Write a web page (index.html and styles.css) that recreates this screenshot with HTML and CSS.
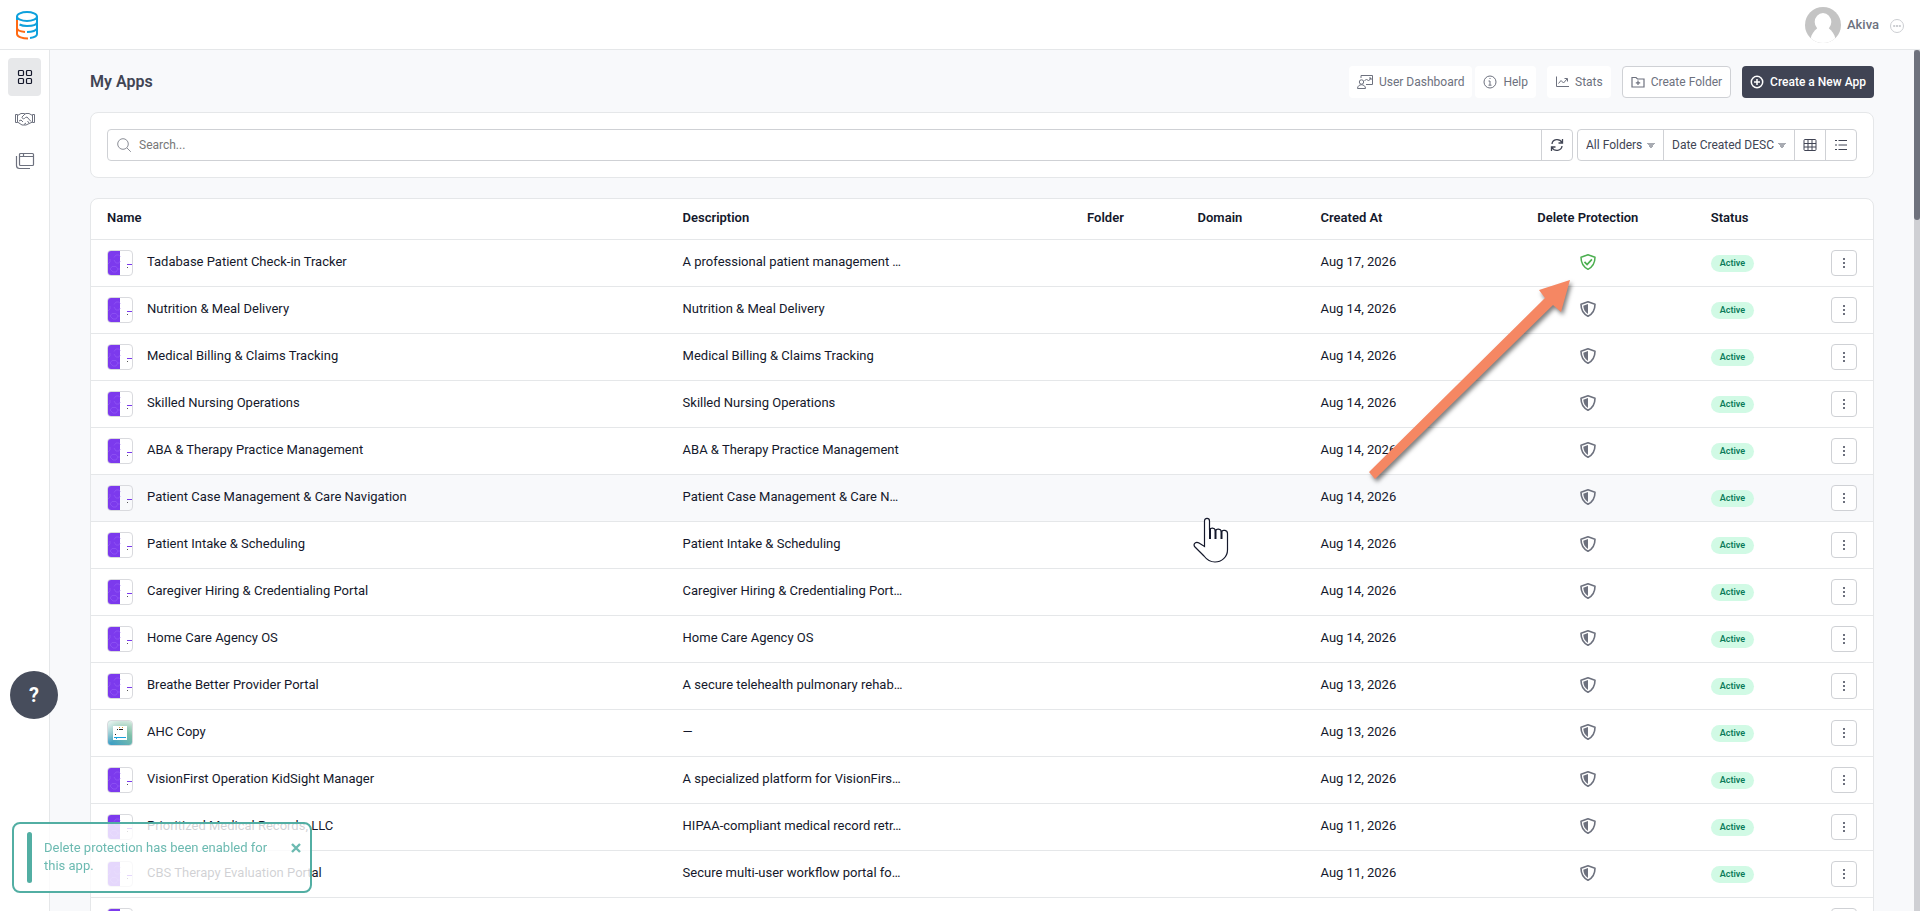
FILE: index.html
```
<!DOCTYPE html>
<html lang="en">
<head>
    <meta charset="UTF-8">
    <meta name="viewport" content="width=device-width, initial-scale=1.0">
    <title>My Apps</title>
    <link rel="stylesheet" href="styles.css">
</head>
<body>
    <svg class="sprite" aria-hidden="true">
        <symbol id="shield" viewBox="0 0 16 16">
            <path d="M8 .8 15 3.300c0 6-2 9.500-7 12-5-2.500-7-6-7-12z" fill="none" stroke="currentColor" stroke-width="1.600" stroke-linejoin="round"/>
            <path d="M8 3v10C4.800 10.800 3.500 8.500 3.300 4.800z" fill="currentColor"/>
        </symbol>
        <symbol id="shield-check" viewBox="0 0 16 16">
            <path d="M8 .8 15 3.300c0 6-2 9.500-7 12-5-2.500-7-6-7-12z" fill="none" stroke="currentColor" stroke-width="1.500" stroke-linejoin="round"/>
            <path d="m4.500 7.800 2.600 2.700 4.800-5.200" fill="none" stroke="currentColor" stroke-width="1.700"/>
        </symbol>
        <symbol id="dots" viewBox="0 0 4 12">
            <path d="M1 1h2v2H1zM1 5h2v2H1zM1 9h2v2H1z" fill="currentColor"/>
        </symbol>
        <symbol id="thumb-purple" viewBox="0 0 24 24">
            <path d="M0 0h12v24H0z" fill="#7c3aed"/>
            <g fill="none" stroke="#8b4ff2">
                <path d="M6 6.500 8 4h3l1 1.500M6 9l2 3h3l1-2M2 18l2-2.500h4L10 18l-2 3H5zM0 13l2-2V8M10 18h2"/>
            </g>
            <path d="M19 13h5v1h-5z" fill="#7c3aed"/>
            <path d="M19 16h1v1h-1z" fill="#555"/>
        </symbol>
        <symbol id="thumb-copy" viewBox="0 0 24 24">
            <linearGradient id="copyBg" x1="1" y1="0" x2="0.200" y2="1">
                <stop offset="0" stop-color="#d5e8dd"/>
                <stop offset="0.400" stop-color="#7fc0a8"/>
                <stop offset="1" stop-color="#3f9fc4"/>
            </linearGradient>
            <linearGradient id="copyShine" x1="0" y1="0" x2="0.500" y2="0.600">
                <stop offset="0" stop-color="#fff" stop-opacity="0.900"/>
                <stop offset="1" stop-color="#fff" stop-opacity="0"/>
            </linearGradient>
            <path d="M0 0h24v24H0z" fill="url(#copyBg)"/>
            <path d="M0 0h24v24H0z" fill="url(#copyShine)"/>
            <path d="M5 5h14v14H5z" fill="#fff"/>
            <path d="M9 8h1v1H9zM11 8h4v1h-4zM7 13h1v1H7z" fill="#222"/>
            <path d="M11 6h1v1h-1zM14 6h1v1h-1z" fill="#e0a030"/>
            <path d="M6 16h12v1H6zM8 17h1v1H8z" fill="#18a0dc"/>
        </symbol>
    </svg>

    <header class="topbar">
        <a href="#" class="logo" aria-label="Home">
            <svg width="24" height="30" viewBox="0 0 24 30" fill="none" stroke="#0ea0dc" stroke-width="2">
                <ellipse cx="12" cy="6.500" rx="10" ry="4.500"/>
                <path d="M22 6.500V24c0 2-3 3.500-7 4M22 12c0 3-5 4-10 4-3 0-5.500-.500-7.500-1.500M22 18c0 2.500-5 4-10 4"/>
                <path d="M2 6.500V10"/>
                <path d="M2 10v14c0 3 6 4.500 11 4.500M2 18c0 2 3 3.500 8 4" stroke="#ff6a13"/>
            </svg>
        </a>
        <div class="account">
            <svg class="avatar" viewBox="0 0 36 36">
                <path d="M0 0h36v36H0z" fill="#c4c4c4"/>
                <ellipse cx="18" cy="15" rx="8.300" ry="9" fill="#fff"/>
                <path d="M12.500 21C9 24 6.500 27 5.500 32v4h25v-4c-1-5-3.500-8-7-11z" fill="#fff"/>
            </svg>
            <span class="userName">Akiva</span>
            <button class="moreBtn" aria-label="Account menu">
                <svg width="14" height="14" viewBox="0 0 14 14" fill="none" stroke="#ccced2">
                    <circle cx="7" cy="7" r="6.500"/>
                    <path d="M3.200 7h2M6 7h2M8.800 7h2" stroke-width="2"/>
                </svg>
            </button>
        </div>
    </header>

    <div class="layout">
        <nav class="sidebar">
            <a href="#" class="active" aria-label="Apps">
                <svg width="16" height="16" viewBox="0 0 16 16" fill="none" stroke="currentColor" stroke-width="1.200">
                    <rect x="1.500" y="1.500" width="5" height="5" rx="1"/>
                    <rect x="9.500" y="1.500" width="5" height="5" rx="1"/>
                    <rect x="1.500" y="9.500" width="5" height="5" rx="1"/>
                    <rect x="9.500" y="9.500" width="5" height="5" rx="1"/>
                </svg>
            </a>
            <a href="#" aria-label="Partners">
                <svg width="20" height="14" viewBox="0 0 20 14" fill="none" stroke="currentColor">
                    <path d="M.500 2.500h2v8h-2zM17.500 2.500h2v8h-2zM2.500 3.500 6 1.500h3l1 .500 1-.500h3l3.500 2M2.500 10l4.500 3h4l6.500-3M10 2 7 5c0 2 2 2.500 3.500.500l1.500-.500 4 4.500M9 12.500l2-1.500M12.500 9l1.500 2M4 9l2-1 2 2"/>
                </svg>
            </a>
            <a href="#" aria-label="Pages">
                <svg width="20" height="18" viewBox="0 0 20 18" fill="none" stroke="currentColor" stroke-width="1.200">
                    <rect x="4.500" y="1.500" width="14" height="12" rx="1"/>
                    <path d="M4.500 4.500h14M8.500 1.500v3M1.500 4v9.500q0 3 3 3H15"/>
                </svg>
            </a>
        </nav>

        <main class="content">
            <div class="pageHead">
                <h1>My Apps</h1>
                <div class="actions">
                    <button class="btn">
                        <svg width="16" height="16" viewBox="0 0 16 16" fill="none" stroke="currentColor">
                            <path d="M4 4V1.500h11.500v9H9M7.500 7l2-2 2 2 2.500-3M12 4h2v2"/>
                            <circle cx="4.500" cy="8" r="2.200"/>
                            <path d="M.500 14.500c0-5 8-5 8 0z"/>
                        </svg>
                        User Dashboard
                    </button>
                    <button class="btn helpBtn">
                        <svg width="14" height="14" viewBox="0 0 14 14" fill="none" stroke="currentColor">
                            <circle cx="7" cy="7" r="6"/>
                            <path d="M5.500 6H7v4M5.500 10.200h3M6.500 3.500h1"/>
                        </svg>
                        Help
                    </button>
                    <button class="btn">
                        <svg width="14" height="14" viewBox="0 0 14 14" fill="none" stroke="currentColor">
                            <path d="M1.500 1.500v10H14M3.500 8.500 6 5.500l2.500 2.500L12 4M9.500 3.500h3v3"/>
                        </svg>
                        Stats
                    </button>
                    <button class="btn outline">
                        <svg width="14" height="14" viewBox="0 0 14 14" fill="none" stroke="currentColor" stroke-width="1.200">
                            <path d="M1 2.500h4l1.500 1.500H13v8H1zM7 5.500v4.500M4.800 7.800h4.400"/>
                        </svg>
                        Create Folder
                    </button>
                    <button class="btn primary">
                        <svg width="14" height="14" viewBox="0 0 14 14" fill="none" stroke="currentColor" stroke-width="1.500">
                            <circle cx="7" cy="7" r="5.700"/>
                            <path d="M7 4v6M4 7h6"/>
                        </svg>
                        Create a New App
                    </button>
                </div>
            </div>

            <section class="card filters">
                <div class="searchGroup">
                    <label class="searchBox">
                        <svg width="14" height="14" viewBox="0 0 14 14" fill="none" stroke="#8a8d96">
                            <circle cx="6" cy="6" r="5.300"/>
                            <path d="m9.800 9.800 4 4"/>
                        </svg>
                        <input type="text" placeholder="Search..." aria-label="Search">
                    </label>
                    <button class="tool" aria-label="Refresh">
                        <svg width="14" height="14" viewBox="0 0 14 14" fill="none" stroke="currentColor" stroke-width="1.300">
                            <path d="M2 6c.500-5 7.500-6 10-1.500M12 8c-.500 5-7.500 6-10 1.500M12.500 1v4h-4M1.500 13V9h4"/>
                        </svg>
                    </button>
                </div>
                <div class="viewGroup">
                    <select class="folders" aria-label="Folder">
                        <option>All Folders</option>
                    </select>
                    <select class="sorting" aria-label="Sort by">
                        <option>Date Created DESC</option>
                    </select>
                    <button class="tool" aria-label="Grid view">
                        <svg width="14" height="14" viewBox="0 0 14 14" fill="none" stroke="currentColor">
                            <rect x="1" y="1.500" width="12" height="11" rx="1"/>
                            <path d="M1 5.500h12M1 9h12M5 1.500v11M9 1.500v11"/>
                        </svg>
                    </button>
                    <button class="tool" aria-label="List view">
                        <svg width="14" height="14" viewBox="0 0 14 14" fill="none" stroke="currentColor" stroke-width="1.200">
                            <path d="M4.500 2.500H13M4.500 7H13M4.500 11.500H13M1 2.500h2M1 7h2M1 11.500h2"/>
                        </svg>
                    </button>
                </div>
            </section>

            <section class="card">
                <table class="apps">
                    <thead>
                        <tr>
                            <th class="colName">Name</th>
                            <th class="colDesc">Description</th>
                            <th class="colFolder">Folder</th>
                            <th class="colDomain">Domain</th>
                            <th class="colCreated">Created At</th>
                            <th class="colProtect">Delete Protection</th>
                            <th class="colStatus">Status</th>
                            <th class="colMenu"></th>
                        </tr>
                    </thead>
                    <tbody id="appRows"></tbody>
                </table>
            </section>
        </main>
        <div class="scrollTrack"><div class="scrollThumb"></div></div>
    </div>

    <button class="helpBubble" aria-label="Help">?</button>

    <div class="toast" role="status">
        <span class="toastBar"></span>
        <p>Delete protection has been enabled for this app.</p>
        <button aria-label="Close">
            <svg width="10" height="10" viewBox="0 0 10 10" stroke="currentColor" stroke-width="2.400">
                <path d="m1 1 8 8M9 1 1 9"/>
            </svg>
        </button>
    </div>

    <svg class="arrow" width="220" height="220" viewBox="0 0 220 220">
        <path d="M206 10 197 42 189 35 11 209 5 202 181 28 175 20z" fill="#f58763"/>
    </svg>

    <svg class="hand" width="36" height="48" viewBox="0 0 36 48" fill="#fff" stroke="#14182b" stroke-width="1.200">
        <path d="M11.500 29.500V4c0-3.500 5-3.500 5 0v9c1-2.500 5-2.500 6 .500 1-2 5-2 6 1 1-2 6-1.500 6 2V33c0 7-6 12-12.500 12-5 0-8-2-11-6L2 30c-2.500-3 1-6 4-4z"/>
        <path d="M17 12v10M22.500 13v9M28.500 14v8" stroke-width="2"/>
    </svg>

    <script src="rows.js"></script>
</body>
</html>
```

FILE: styles.css
```
*{
    padding: 0px;
    margin: 0px;
    box-sizing: border-box;
}
body{
    height: 100vh;
    display: flex;
    flex-direction: column;
    overflow: hidden;
    font-family: Roboto, "Liberation Sans", sans-serif;
    font-size: 13px;
    line-height: 18px;
    color: #14182b;
    background-color: #f8f9fb;
}
button, input, select{
    font: inherit;
    color: inherit;
    background: none;
    border: none;
}
button{
    cursor: pointer;
}
svg{
    display: block;
    flex-shrink: 0;
}
.sprite{
    position: absolute;
    width: 0px;
    height: 0px;
}

.topbar{
    display: flex;
    align-items: center;
    justify-content: space-between;
    height: 50px;
    padding: 0px 16px 0px 15px;
    background-color: #fff;
    border-bottom: 1px solid #e5e7e9;
}
.account{
    display: flex;
    align-items: center;
    gap: 6px;
    color: #6d717e;
}
.avatar{
    width: 36px;
    height: 36px;
    border-radius: 50%;
}
.userName{
    font-weight: 500;
}
.moreBtn{
    margin-left: 5px;
    padding-top: 3px;
}

.layout{
    flex: 1;
    display: flex;
    min-height: 0px;
}
.sidebar{
    display: flex;
    flex-direction: column;
    gap: 4px;
    width: 50px;
    padding: 8px;
    background-color: #fff;
    border-right: 1px solid #e5e7e9;
}
.sidebar a{
    display: flex;
    align-items: center;
    justify-content: center;
    height: 38px;
    border-radius: 4px;
    color: #6d717e;
}
.sidebar .active{
    color: #14182b;
    background-color: #e7e8ea;
}
.content{
    flex: 1;
    min-width: 0px;
    overflow: hidden;
    padding: 16px 40px 0px;
}
.scrollTrack{
    width: 6px;
    background-color: #cfd0d4;
}
.scrollThumb{
    height: 170px;
    border-radius: 3px;
    background-color: #6f727d;
}

.pageHead{
    display: flex;
    align-items: center;
    justify-content: space-between;
    margin-bottom: 14px;
}
.pageHead h1{
    font-size: 16px;
    font-weight: 600;
    color: #414554;
}
.actions{
    display: flex;
    gap: 11px;
}
.btn{
    display: flex;
    align-items: center;
    gap: 6px;
    height: 32px;
    padding: 0px 8px;
    border-radius: 4px;
    font-size: 12px;
    color: #6d717e;
    background-color: #fff;
}
.helpBtn{
    margin-left: -8px;
}
.outline{
    border: 1px solid #cfd1d5;
}
.primary{
    font-weight: 500;
    color: #fff;
    background-color: #404454;
}

.card{
    margin-bottom: 20px;
    background-color: #fff;
    border: 1px solid #e5e7e9;
    border-radius: 8px;
}
.filters{
    display: flex;
    gap: 4px;
    padding: 16px;
}
.searchGroup, .viewGroup{
    display: flex;
    height: 32px;
    border: 1px solid #cfd1d5;
    border-radius: 4px;
    color: #414554;
}
.searchGroup{
    flex: 1;
}
.searchBox{
    flex: 1;
    display: flex;
    align-items: center;
    gap: 8px;
    padding-left: 9px;
}
.searchBox input{
    flex: 1;
    outline: none;
    font-size: 12px;
}
.searchBox input::placeholder{
    color: #777;
}
.tool{
    display: flex;
    align-items: center;
    justify-content: center;
    width: 31px;
    border-left: 1px solid #cfd1d5;
}
.viewGroup select{
    appearance: none;
    padding: 0px 20px 0px 8px;
    font-size: 12px;
    background: linear-gradient(to bottom right, #a8abb2 55%, transparent 55%) no-repeat right 8px center / 4px 5px,
        linear-gradient(to bottom left, #a8abb2 55%, transparent 55%) no-repeat right 12px center / 4px 5px;
}
.viewGroup .sorting{
    border-left: 1px solid #cfd1d5;
}

.apps{
    width: 100%;
    table-layout: fixed;
    border-collapse: collapse;
}
.apps th{
    height: 40px;
    padding: 0px 16px 2px;
    text-align: left;
    font-weight: 600;
    white-space: nowrap;
}
.apps td{
    height: 47px;
    padding: 0px 16px 2px;
    border-top: 1px solid #e5e7e9;
    white-space: nowrap;
}
.apps .centered{
    padding: 0px 16px;
}
.apps .hovered{
    background-color: #f8f9fb;
}
.colName{ width: 32.3%; }
.colDesc{ width: 22.7%; }
.colFolder{ width: 6.2%; }
.colDomain{ width: 6.9%; }
.colCreated{ width: 9.9%; }
.apps .colProtect{ width: 12%; text-align: center; }
.colStatus{ width: 6%; }
.appCell{
    display: flex;
    align-items: center;
    gap: 14px;
}
.appName{
    padding-bottom: 2px;
}
.thumb{
    width: 26px;
    height: 26px;
    border: 1px solid #d9dade;
    border-radius: 4px;
}
.shield{
    width: 16px;
    height: 16px;
    margin: 0px auto;
    color: #6d717e;
}
.shield.on{
    color: #4caf50;
}
.badge{
    display: inline-block;
    padding: 0px 9px;
    border-radius: 9px;
    font-size: 9px;
    line-height: 17px;
    font-weight: 600;
    color: #0b7a5a;
    background-color: #d1fae5;
}
.rowMenu{
    display: flex;
    align-items: center;
    justify-content: center;
    width: 26px;
    height: 26px;
    margin-left: auto;
    border: 1px solid #cfd1d5;
    border-radius: 4px;
    color: #6d717e;
    background-color: #fff;
}
.rowMenu svg{
    width: 4px;
    height: 12px;
}

.helpBubble{
    position: fixed;
    left: 10px;
    bottom: 192px;
    width: 48px;
    height: 48px;
    border-radius: 50%;
    font-size: 20px;
    font-weight: 700;
    color: #fff;
    background-color: #474d5c;
}
.toast{
    position: fixed;
    left: 12px;
    bottom: 18px;
    display: flex;
    gap: 12px;
    width: 300px;
    padding: 8px 9px 8px 13px;
    border: 2px solid #52aea3;
    border-radius: 8px;
    color: #6cbab1;
    background-color: rgba(255, 255, 255, .8);
}
.toastBar{
    width: 5px;
    border-radius: 3px;
    background-color: #52aea3;
}
.toast p{
    flex: 1;
    padding: 7px 0px 8px;
}
.toast button{
    align-self: flex-start;
    padding-top: 11px;
}
.arrow{
    position: fixed;
    left: 1364px;
    top: 270px;
    filter: drop-shadow(2px 3px 2px rgba(0, 0, 0, .5));
}
.hand{
    position: fixed;
    left: 1193px;
    top: 517px;
}
```

FILE: rows.js
```
const apps = [
    ['Tadabase Patient Check-in Tracker', 'A professional patient management …', 'Aug 17, 2026'],
    ['Nutrition & Meal Delivery', 'Nutrition & Meal Delivery', 'Aug 14, 2026'],
    ['Medical Billing & Claims Tracking', 'Medical Billing & Claims Tracking', 'Aug 14, 2026'],
    ['Skilled Nursing Operations', 'Skilled Nursing Operations', 'Aug 14, 2026'],
    ['ABA & Therapy Practice Management', 'ABA & Therapy Practice Management', 'Aug 14, 2026'],
    ['Patient Case Management & Care Navigation', 'Patient Case Management & Care N…', 'Aug 14, 2026'],
    ['Patient Intake & Scheduling', 'Patient Intake & Scheduling', 'Aug 14, 2026'],
    ['Caregiver Hiring & Credentialing Portal', 'Caregiver Hiring & Credentialing Port…', 'Aug 14, 2026'],
    ['Home Care Agency OS', 'Home Care Agency OS', 'Aug 14, 2026'],
    ['Breathe Better Provider Portal', 'A secure telehealth pulmonary rehab…', 'Aug 13, 2026'],
    ['AHC Copy', '—', 'Aug 13, 2026'],
    ['VisionFirst Operation KidSight Manager', 'A specialized platform for VisionFirs…', 'Aug 12, 2026'],
    ['Prioritized Medical Records, LLC', 'HIPAA-compliant medical record retr…', 'Aug 11, 2026'],
    ['CBS Therapy Evaluation Portal', 'Secure multi-user workflow portal fo…', 'Aug 11, 2026'],
    ['', '', '']
];
const protectedRow = 0;
const hoveredRow = 5;

function escapeText(text){
    return text.replace(/&/g, '&amp;');
}

document.getElementById('appRows').innerHTML = apps.map(function([name, desc, created], i){
    const on = i == protectedRow;
    return `<tr class="${i == hoveredRow ? 'hovered' : ''}">
        <td class="centered"><div class="appCell">
            <svg class="thumb"><use href="#${name == 'AHC Copy' ? 'thumb-copy' : 'thumb-purple'}"/></svg>
            <span class="appName">${escapeText(name)}</span>
        </div></td>
        <td>${escapeText(desc)}</td>
        <td></td>
        <td></td>
        <td>${created}</td>
        <td><svg class="shield ${on ? 'on' : ''}"><use href="#${on ? 'shield-check' : 'shield'}"/></svg></td>
        <td class="centered">${name ? '<span class="badge">Active</span>' : ''}</td>
        <td class="centered"><button class="rowMenu" aria-label="App menu"><svg><use href="#dots"/></svg></button></td>
    </tr>`;
}).join('');
```
